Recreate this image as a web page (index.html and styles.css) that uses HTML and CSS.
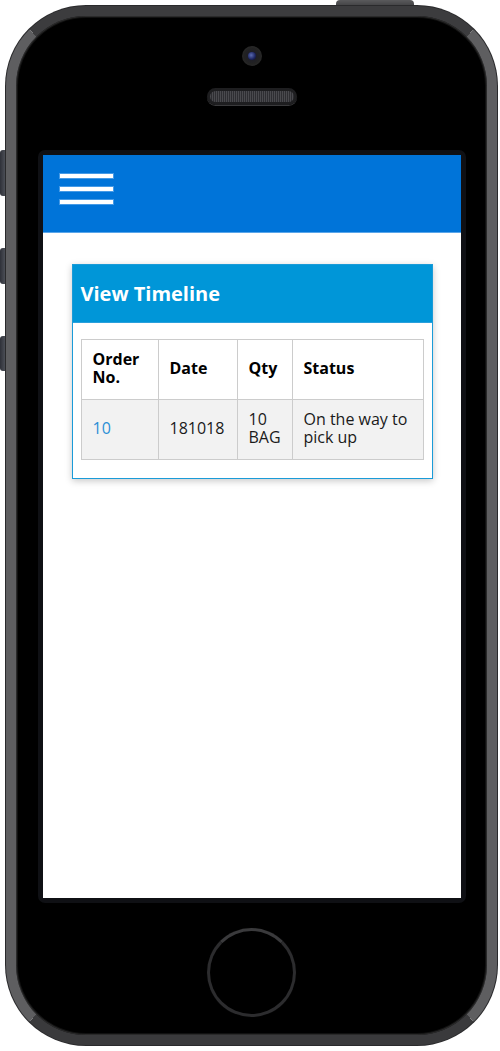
FILE: index.html
```html
<!DOCTYPE html>
<html lang="en">
<head>
<meta charset="utf-8">
<title>View Timeline</title>
<link rel="stylesheet" href="styles.css">
</head>
<body>
<div class="stage">
  <div class="btn-top"></div>
  <div class="btn-side b1"></div>
  <div class="btn-side b2"></div>
  <div class="btn-side b3"></div>
  <div class="phone">
    <div class="camera"><span class="lens"></span></div>
    <div class="speaker"></div>
    <div class="bezel">
      <div class="screen">
        <header class="appbar">
          <span class="burger"><i></i><i></i><i></i></span>
        </header>
        <main class="content">
          <section class="card">
            <h2 class="card-title">View Timeline</h2>
            <div class="card-body">
              <table class="grid">
                <colgroup>
                  <col class="c-order"><col class="c-date"><col class="c-qty"><col class="c-status">
                </colgroup>
                <thead>
                  <tr><th>Order No.</th><th>Date</th><th>Qty</th><th>Status</th></tr>
                </thead>
                <tbody>
                  <tr><td><a class="link" href="#">10</a></td><td>181018</td><td>10 BAG</td><td>On the way to pick up</td></tr>
                </tbody>
              </table>
            </div>
          </section>
        </main>
      </div>
    </div>
    <div class="home"></div>
  </div>
</div>
</body>
</html>
```

FILE: styles.css
```css
* { box-sizing: border-box; }
html, body { margin: 0; padding: 0; background: #ffffff; }
body { font-family: "Open Sans", "Noto Sans", "Liberation Sans", sans-serif; }

.stage { position: relative; width: 500px; height: 1051px; padding: 6px 0 0 6px; }

.btn-top {
  position: absolute; left: 336px; top: 0; width: 78px; height: 8px;
  background: linear-gradient(#5a5a5c, #3a3a3c);
  border-radius: 4px 4px 0 0;
}
.btn-side {
  position: absolute; left: 0; width: 8px;
  background: linear-gradient(90deg, #2e3038, #4a4d55 60%, #2a2c33);
  border-radius: 3px 0 0 3px;
}
.b1 { top: 150px; height: 46px; }
.b2 { top: 248px; height: 36px; }
.b3 { top: 336px; height: 35px; }

.phone {
  position: relative;
  width: 491px; height: 1039px;
  border-radius: 80px;
  border: 10px solid #5e5e60;
  border-top-color: #3c3c3e;
  border-bottom-color: #3a3a3c;
  background: #000;
  box-shadow: inset 0 0 0 1px #2a2a2a, inset 0 0 0 2px #111, 0 0 0 1px #2a2a2c;
  display: flex; flex-direction: column; align-items: center;
}

.camera {
  margin-top: 30px; width: 20px; height: 20px; border-radius: 50%;
  background: radial-gradient(circle at 50% 50%, #1a1a2a 0, #222 55%, #333 100%);
  display: flex; align-items: center; justify-content: center;
}
.lens { width: 8px; height: 8px; border-radius: 50%; background: radial-gradient(circle at 40% 40%, #5a6ab0 0, #1c2460 60%, #0a0c20 100%); }

.speaker {
  margin-top: 22px; width: 90px; height: 17px; border-radius: 9px;
  background: repeating-linear-gradient(90deg, #4a4a4e 0 1px, #2e2e32 1px 2px);
  border: 3px solid #1e1e20;
  box-shadow: 0 1px 0 #3a3a3c;
}

.bezel {
  margin-top: 45px; width: 428px; height: 753px;
  background: #0f1014; border-radius: 7px; padding: 5px;
}
.screen { width: 418px; height: 743px; background: #fff; overflow: hidden; }

.appbar {
  height: 78px; background: #0074d9;
  border-bottom: 1px solid #5aa6ea;
  padding: 19px 0 0 17px;
}
.burger { display: flex; flex-direction: column; gap: 9px; width: 53px; }
.burger i { display: block; height: 4px; background: #fff; box-shadow: 0 0 0 1px rgba(200,225,255,.35); }

.content { padding: 31px 28px 0 29px; }

.card {
  border: 1px solid #1a9bd8;
  background: #fff;
  box-shadow: 0 2px 7px rgba(0,0,0,.22);
}
.card-title {
  margin: 0; height: 57px; line-height: 57px;
  background: #0096d8; color: #fff;
  font-size: 20px; font-weight: 700; padding-left: 8px;
}
.card-body { padding: 16px 9px 18px 8px; border-top: 1px solid #2aa0dc; }

.grid { width: 342px; border-collapse: collapse; table-layout: fixed; }
.c-order { width: 77px; }
.c-date { width: 79px; }
.c-qty { width: 55px; }
.c-status { width: 131px; }
.grid th, .grid td {
  border: 1px solid #cccccc; height: 60px;
  padding: 0 10px 3px 11px; text-align: left; vertical-align: middle;
  font-size: 16px; line-height: 18px; color: #000;
}
.grid th { font-weight: 700; background: #fff; }
.grid td { background: #f2f2f2; color: #1a1a1a; }
.link { color: #2b8fd6; text-decoration: none; }

.home {
  margin-top: 25px; width: 89px; height: 89px; border-radius: 50%;
  border: 3px solid #2c2c2e;
  border-top-color: #3a3a3c;
  box-shadow: inset 0 0 2px #000, 0 0 1px #111;
}
```
